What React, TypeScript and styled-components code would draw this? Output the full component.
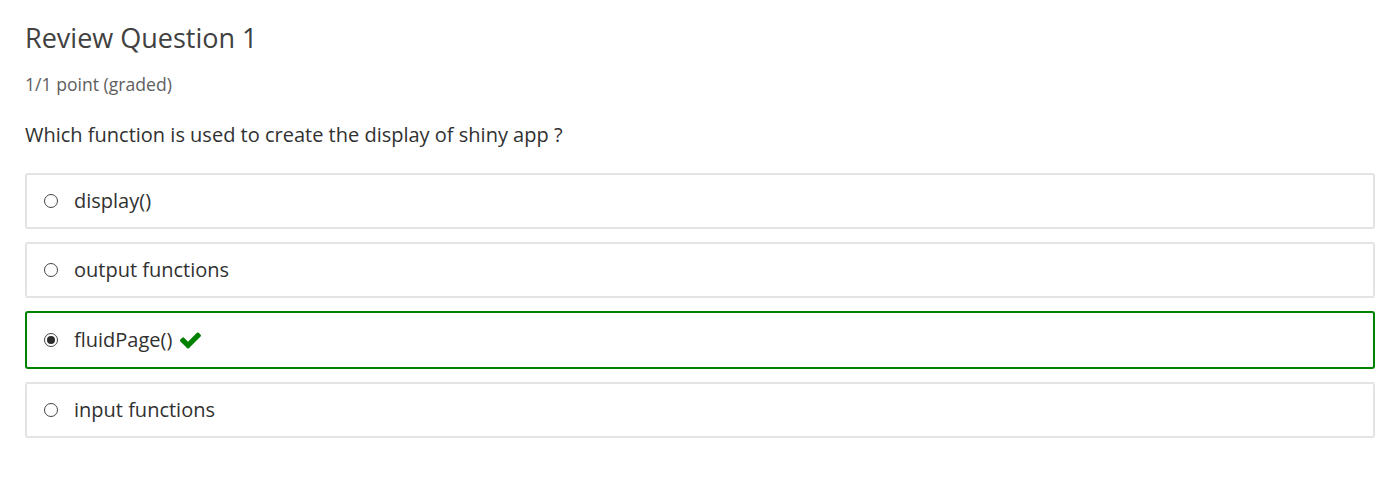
import React from "react";
import styled, { createGlobalStyle } from "styled-components";

const Global = createGlobalStyle`
  html, body { margin: 0; padding: 0; background: #fff; }
  body { font-family: "Open Sans", "Noto Sans", sans-serif; color: #313131; }
`;

const Page = styled.div`
  padding: 22px 24px 40px 25px;
`;

const Title = styled.h3`
  margin: 0;
  font-size: 27px;
  font-weight: 400;
  line-height: 32px;
  color: #414141;
`;

const Meta = styled.div`
  margin-top: 18px;
  font-size: 17.6px;
  line-height: 24px;
  color: #5e5e5e;
`;

const Prompt = styled.p`
  margin: 25px 0 0;
  font-size: 20px;
  line-height: 28px;
  color: #313131;
`;

const Options = styled.div`
  margin-top: 24px;
  display: flex;
  flex-direction: column;
  gap: 13px;
`;

const Option = styled.label<{ $correct?: boolean }>`
  display: flex;
  align-items: center;
  gap: 16px;
  height: ${(p) => (p.$correct ? 58 : 56)}px;
  box-sizing: border-box;
  padding: 0 17px;
  border: 2px solid ${(p) => (p.$correct ? "#008100" : "#e4e4e4")};
  border-radius: 3px;
  font-size: 20px;
  color: #313131;
`;

const Radio = styled.span<{ $checked?: boolean }>`
  width: 14px;
  height: 14px;
  box-sizing: border-box;
  border-radius: 50%;
  border: 1px solid #444;
  background: #fff;
  display: flex;
  align-items: center;
  justify-content: center;
  flex: none;
  &::after {
    content: "";
    display: ${(p) => (p.$checked ? "block" : "none")};
    width: 8px;
    height: 8px;
    border-radius: 50%;
    background: #2b2b2b;
  }
`;

const Text = styled.span`
  display: inline-flex;
  align-items: center;
  gap: 8px;
  line-height: 28px;
`;

const Check = () => (
  <svg width="21" height="17" viewBox="0 0 1550 1188" aria-hidden>
    <path
      fill="#008100"
      d="M1550 232q0 40-28 68l-724 724-136 136q-28 28-68 28t-68-28l-136-136-362-362q-28-28-28-68t28-68l136-136q28-28 68-28t68 28l294 295 656-657q28-28 68-28t68 28l136 136q28 28 28 68z"
    />
  </svg>
);

const options = [
  { label: "display()" },
  { label: "output functions" },
  { label: "fluidPage()", correct: true },
  { label: "input functions" },
];

export default function App() {
  return (
    <>
      <Global />
      <Page>
        <Title>Review Question 1</Title>
        <Meta>1/1 point (graded)</Meta>
        <Prompt>Which function is used to create the display of shiny app ?</Prompt>
        <Options>
          {options.map((o) => (
            <Option key={o.label} $correct={o.correct}>
              <Radio $checked={o.correct} />
              <Text>
                {o.label}
                {o.correct && <Check />}
              </Text>
            </Option>
          ))}
        </Options>
      </Page>
    </>
  );
}
